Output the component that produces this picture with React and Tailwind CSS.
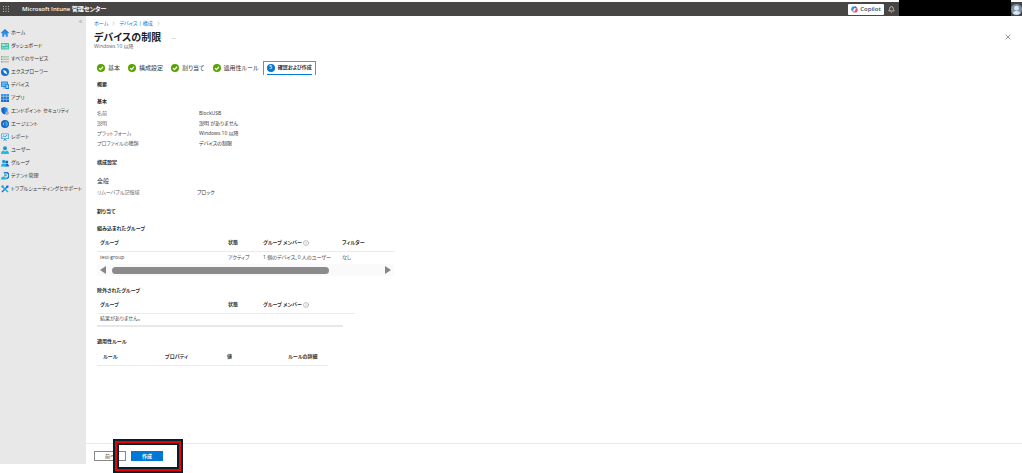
import { Bell, ChevronRight, ChevronsLeft, Info, X } from 'lucide-react'

const navItems = [
  { label: 'ホーム', icon: HomeIcon },
  { label: 'ダッシュボード', icon: DashboardIcon },
  { label: 'すべてのサービス', icon: ServicesIcon },
  { label: 'エクスプローラー', icon: ExplorerIcon },
  { label: 'デバイス', icon: DevicesIcon },
  { label: 'アプリ', icon: AppsIcon },
  { label: 'エンドポイント セキュリティ', icon: SecurityIcon },
  { label: 'エージェント', icon: AgentIcon },
  { label: 'レポート', icon: ReportIcon },
  { label: 'ユーザー', icon: UserIcon },
  { label: 'グループ', icon: GroupIcon },
  { label: 'テナント管理', icon: TenantIcon },
  { label: 'トラブルシューティングとサポート', icon: ToolsIcon },
]

const steps = ['基本', '構成設定', '割り当て', '適用性ルール']

const basics = [
  ['名前', 'BlockUSB'],
  ['説明', '説明 がありません'],
  ['プラットフォーム', 'Windows 10 以降'],
  ['プロファイルの種類', 'デバイスの制限'],
]

function Icon({ children }) {
  return (
    <svg viewBox="0 0 16 16" className="size-2 shrink-0" aria-hidden="true">
      {children}
    </svg>
  )
}

function HomeIcon() {
  return (
    <Icon>
      <path d="M2.500 7v8.500h4V11h3v4.500h4V7L8 2z" fill="#2b8fe6" />
      <path d="M8 0 0 7.500 1.500 9 8 3l6.500 6L16 7.500z" fill="#1b78cf" />
    </Icon>
  )
}

function DashboardIcon() {
  return (
    <Icon>
      <rect y="2" width="16" height="13" rx="1" fill="#45c3aa" />
      <path d="M2 4h7v4H2z" fill="#a5e6d6" />
      <path d="M11 4h3v4h-3zM2 10h3v3H2zM7 10h7v3H7z" fill="#8bdcc9" />
    </Icon>
  )
}

function ServicesIcon() {
  return (
    <Icon>
      <path d="M0 2h3v3H0zM0 7h3v3H0zM0 12h3v3H0z" fill="#6bb36b" />
      <path d="M4 2h12v3H4zM4 7h12v3H4zM4 12h12v3H4z" fill="#b7c4b5" />
    </Icon>
  )
}

function ExplorerIcon() {
  return (
    <Icon>
      <circle cx="8" cy="8" r="8" fill="#1672cc" />
      <path d="m4 4 6 2 2.500 6.500-6-2.500z" fill="#fff" />
    </Icon>
  )
}

function DevicesIcon() {
  return (
    <Icon>
      <rect y="1" width="14" height="11" rx="1" fill="#2389de" />
      <path d="M1.500 2.500h11v8h-11z" fill="#5db5f0" />
      <path d="M5 12h4v2h2v1H3v-1h2z" fill="#8aa4b8" />
      <rect x="9" y="6" width="7" height="10" rx="1" fill="#1672cc" />
      <path d="M10.500 7.500h4V14h-4z" fill="#8fd6fa" />
    </Icon>
  )
}

function AppsIcon() {
  return (
    <Icon>
      <path d="M0 0h5v5H0zM5.500 0h5v5h-5zM11 0h5v5h-5z" fill="#3f95e4" />
      <path d="M0 5.500h5v5H0zM5.500 5.500h5v5h-5zM11 5.500h5v5h-5z" fill="#2882da" />
      <path d="M0 11h5v5H0zM5.500 11h5v5h-5zM11 11h5v5h-5z" fill="#1b6fc8" />
    </Icon>
  )
}

function SecurityIcon() {
  return (
    <Icon>
      <path d="M7 0c2 1.500 4 2 6 2v5c0 4-3 6.500-6 8-3-1.500-6-4-6-8V2c2 0 4-.5 6-2z" fill="#1f8be6" />
      <path d="M7 0v15c-3-1.500-6-4-6-8V2c2 0 4-.5 6-2z" fill="#1268ba" />
      <circle cx="12" cy="12" r="3.500" fill="#8298ad" />
      <circle cx="12" cy="12" r="1.300" fill="#e8e8e8" />
    </Icon>
  )
}

function AgentIcon() {
  return (
    <Icon>
      <circle cx="8" cy="8" r="8" fill="#1566bd" />
      <path d="M9 2c3 1 5 3 5 6s-2 5-5 6c1-2 1-4 0-6s-1-4 0-6z" fill="#3fa0ea" />
      <path d="M7 3.500 5.500 8 7 12.500 3.500 8z" fill="#bfe3fb" />
    </Icon>
  )
}

function ReportIcon() {
  return (
    <Icon>
      <rect y="1" width="16" height="11" rx="1" fill="#46a3e0" />
      <path d="M1.500 2.500h13v8h-13z" fill="#d9f0fc" />
      <path d="m3 8 3-2.500 2 2L12.500 4" stroke="#1672cc" strokeWidth="1.500" fill="none" />
      <path d="M6 12h4v2h2v1H4v-1h2z" fill="#5c9cc5" />
    </Icon>
  )
}

function UserIcon() {
  return (
    <Icon>
      <circle cx="8" cy="4.500" r="4" fill="#1f95cc" />
      <path d="M0 16c0-5 3-7 5-7l3 2.500L11 9c2 0 5 2 5 7z" fill="#22b9dd" />
    </Icon>
  )
}

function GroupIcon() {
  return (
    <Icon>
      <circle cx="11.500" cy="6" r="3" fill="#1068bd" />
      <path d="M7 15c0-4 2-5.500 4.500-5.500S16 11 16 15z" fill="#1068bd" />
      <circle cx="5.500" cy="5" r="3.500" fill="#1d9ddb" />
      <path d="M0 15c0-4 2-6 5.500-6s5.500 2 5.500 6z" fill="#1cb3e0" />
    </Icon>
  )
}

function TenantIcon() {
  return (
    <Icon>
      <path d="M6 2.500a6 6 0 1 1 4.500 10.500" stroke="#1672cc" strokeWidth="3" fill="none" />
      <circle cx="9" cy="6.500" r="2.500" fill="#28b6e4" />
      <path d="M0 15c0-4 2-6 5-6s5 2 5 6z" fill="#1cb3e0" />
    </Icon>
  )
}

function ToolsIcon() {
  return (
    <Icon>
      <path d="m2 14 11-11" stroke="#1672cc" strokeWidth="3" />
      <path d="m3 3 11 11" stroke="#27aee0" strokeWidth="3" />
      <path d="M0 2.500 2.500 0 6 2 5 6 2 6z" fill="#27aee0" />
      <path d="m11 1 4 0 0 4-3 1-2-2z" fill="#1672cc" />
    </Icon>
  )
}

function CopilotIcon() {
  return (
    <svg viewBox="0 0 16 16" className="size-[7px] shrink-0" aria-hidden="true">
      <path d="M5 1h5c2 0 2.500 2 3 4H7L5 11H3C0 11 0 8 1 5s2-4 4-4z" fill="#2f8ce8" />
      <path d="M11 15H6c-2 0-2.500-2-3-4h6l2-6h2c3 0 3 3 2 6s-2 4-4 4z" fill="#e2508c" />
      <path d="M3 11h6l-1 4H6c-2 0-2.500-2-3-4z" fill="#f5b13d" />
      <path d="M10 1c2 0 2.500 2 3 4h-3L9 1z" fill="#6a4fd0" />
      <path d="M7 5.500h3.500L9 10.500H5.500z" fill="#fff" />
    </svg>
  )
}

function CheckIcon() {
  return (
    <Icon>
      <circle cx="8" cy="8" r="8" fill="#57a300" />
      <path d="m4 8.200 3 3L12 5.500" stroke="#fff" strokeWidth="2.500" fill="none" />
    </Icon>
  )
}

function SectionTitle({ children, className }) {
  return <h3 className={`text-[5px] leading-[10px] font-bold text-[#292827] ${className}`}>{children}</h3>
}

function HeadCell({ children, info = false, className = 'pl-[3px]' }) {
  return (
    <th scope="col" className={`h-4 text-left font-semibold text-[#323130] ${className}`}>
      <span className="flex items-center gap-px">
        {children}
        {info && <Info className="size-[6px] text-[#8a8886]" />}
      </span>
    </th>
  )
}

function TopBar() {
  return (
    <header className="mt-0.5 flex h-[14px] shrink-0 items-center bg-[#484644] text-white">
      <button type="button" aria-label="ポータル メニュー" className="ml-[2px] flex size-2 items-center justify-center">
        <svg viewBox="0 0 12 12" className="size-[6px]" fill="#b5b3b1">
          <path d="M0 0h2v2H0zM5 0h2v2H5zM10 0h2v2h-2zM0 5h2v2H0zM5 5h2v2H5zM10 5h2v2h-2zM0 10h2v2H0zM5 10h2v2H5zM10 10h2v2h-2z" />
        </svg>
      </button>
      <h1 className="ml-3 text-[6px] font-semibold">Microsoft Intune 管理センター</h1>
      <button
        type="button"
        className="ml-auto flex h-[11px] w-9 items-center justify-center gap-0.5 rounded-[1px] bg-white text-[6px] font-semibold text-[#3b4a63]"
      >
        <CopilotIcon />
        Copilot
      </button>
      <button type="button" aria-label="通知" className="mx-1 flex size-[7px] items-center">
        <Bell className="size-[7px]" />
      </button>
      <div className="-mt-0.5 h-4 w-28 bg-black" />
      <button type="button" aria-label="アカウント" className="w-[11px]">
        <svg viewBox="0 0 16 16" className="size-[11px]">
          <circle cx="8" cy="8" r="8" fill="#7f93a8" />
          <circle cx="8" cy="6" r="3.500" fill="#dce4ec" />
          <path d="M2.500 13.500c1-3 3-3.500 5.500-3.500s4.500.5 5.500 3.500a8 8 0 0 1-11 0z" fill="#dce4ec" />
        </svg>
      </button>
    </header>
  )
}

function Sidebar() {
  return (
    <nav className="mb-[9px] w-[86px] shrink-0 bg-[#e8e8e8]">
      <div className="flex h-[10px] items-center justify-end pr-[3px]">
        <button type="button" aria-label="メニューを折りたたむ">
          <ChevronsLeft className="size-[5px] text-[#605e5c]" />
        </button>
      </div>
      <ul>
        {navItems.map(({ label, icon: ItemIcon }) => (
          <li key={label}>
            <a href="#" className="flex h-[13px] items-center gap-[2px] pl-px text-[5px] text-[#323130]">
              <ItemIcon />
              {label}
            </a>
          </li>
        ))}
      </ul>
    </nav>
  )
}

function Wizard() {
  return (
    <ol className="mt-3 flex h-[14px] items-center gap-2 text-[6px] text-[#323130]">
      {steps.map((step) => (
        <li key={step}>
          <button type="button" className="flex items-center gap-[3px]">
            <CheckIcon />
            {step}
          </button>
        </li>
      ))}
      <li className="-ml-1 h-[14px] border border-b-0 border-[#8a8886] px-[3px]">
        <button
          type="button"
          aria-current="step"
          className="flex h-[13px] items-center gap-[3px] border-b border-[#0078d4] text-[5px] font-semibold"
        >
          <span className="flex size-2 items-center justify-center rounded-full bg-[#0078d4] text-white">5</span>
          確認および作成
        </button>
      </li>
    </ol>
  )
}

function IncludedGroups() {
  return (
    <div className="mt-0.5 w-[297px]">
      <table className="w-full table-fixed text-[5px]">
        <colgroup>
          <col className="w-32" />
          <col className="w-[35px]" />
          <col className="w-[79px]" />
          <col />
        </colgroup>
        <thead>
          <tr className="border-b border-[#edebe9]">
            <HeadCell>グループ</HeadCell>
            <HeadCell>状態</HeadCell>
            <HeadCell info>グループ メンバー</HeadCell>
            <HeadCell>フィルター</HeadCell>
          </tr>
        </thead>
        <tbody>
          <tr className="text-[#484644]">
            <td className="h-[13px] pl-[3px]">test-group</td>
            <td className="pl-[3px]">アクティブ</td>
            <td className="pl-[3px]">1 個のデバイス、0 人のユーザー</td>
            <td className="pl-[3px]">なし</td>
          </tr>
        </tbody>
      </table>
      <div className="flex h-3 items-center bg-[#fafafa] px-[3px]">
        <svg viewBox="0 0 6 8" className="h-2 w-[6px]" fill="#858585">
          <path d="M6 0v8L0 4z" />
        </svg>
        <div className="ml-[6px] h-[7px] w-[217px] rounded-full bg-[#8b8b8b]" />
        <svg viewBox="0 0 6 8" className="ml-auto h-2 w-[6px]" fill="#858585">
          <path d="M0 0v8l6-4z" />
        </svg>
      </div>
    </div>
  )
}

function ExcludedGroups() {
  return (
    <div className="mt-0.5 w-[258px]">
      <table className="w-full table-fixed text-[5px]">
        <colgroup>
          <col className="w-32" />
          <col className="w-[35px]" />
          <col />
        </colgroup>
        <thead>
          <tr className="border-b border-[#edebe9]">
            <HeadCell>グループ</HeadCell>
            <HeadCell>状態</HeadCell>
            <HeadCell info>グループ メンバー</HeadCell>
          </tr>
        </thead>
        <tbody>
          <tr className="text-[#484644]">
            <td className="h-3 pl-[3px] pb-0.5" colSpan={3}>結果がありません。</td>
          </tr>
        </tbody>
      </table>
      <div className="mr-3 h-0.5 bg-[#e8e8e8]" />
    </div>
  )
}

function ApplicabilityRules() {
  return (
    <table className="mt-[3px] w-[231px] table-fixed text-[5px]">
      <thead>
        <tr className="border-b border-[#edebe9]">
          <HeadCell className="w-[62px] pl-[6px]">ルール</HeadCell>
          <HeadCell className="w-[62px] pl-[6px]">プロパティ</HeadCell>
          <HeadCell className="w-[61px] pl-[6px]">値</HeadCell>
          <HeadCell className="pl-[6px]">ルールの詳細</HeadCell>
        </tr>
      </thead>
    </table>
  )
}

export default function App() {
  return (
    <div className="flex h-screen flex-col bg-white font-['Open_Sans','Noto_Sans_CJK_JP',sans-serif] whitespace-nowrap [font-feature-settings:'palt']">
      <TopBar />
      <div className="flex min-h-0 flex-1">
        <Sidebar />
        <main className="flex min-w-0 flex-1 flex-col">
          <div className="min-h-0 flex-1 overflow-hidden pt-0.5 pl-2">
            <nav className="flex items-center gap-[3px] text-[5px] leading-[10px] text-[#0078d4]">
              <a href="#">ホーム</a>
              <ChevronRight className="size-[5px] text-[#8a8886]" />
              <a href="#">デバイス | 構成</a>
              <ChevronRight className="size-[5px] text-[#8a8886]" />
            </nav>
            <div className="mt-[3px] flex items-center leading-3">
              <h2 className="text-[10px] font-semibold text-[#201f1e]">デバイスの制限</h2>
              <button type="button" aria-label="その他" className="ml-2.5 text-[6px] text-[#8a8886]">…</button>
              <button type="button" aria-label="閉じる" className="mr-2.5 ml-auto">
                <X className="size-2 text-[#605e5c]" strokeWidth={2} />
              </button>
            </div>
            <p className="text-[5px] leading-[6px] text-[#605e5c]">Windows 10 以降</p>

            <div className="pl-[3px]">
              <Wizard />
              <SectionTitle className="mt-1">概要</SectionTitle>
              <SectionTitle className="mt-[7px]">基本</SectionTitle>
              <dl className="mt-0.5 text-[5px] leading-[10px]">
                {basics.map(([label, value]) => (
                  <div key={label} className="flex">
                    <dt className="w-[102px] text-[#605e5c]">{label}</dt>
                    <dd className="text-[#323130]">{value}</dd>
                  </div>
                ))}
              </dl>

              <SectionTitle className="mt-[9px]">構成設定</SectionTitle>
              <h4 className="mt-[9px] text-[6px] leading-[10px] text-[#323130]">全般</h4>
              <dl className="mt-px flex text-[5px] leading-[10px]">
                <dt className="w-[100px] text-[#605e5c]">リムーバブル記憶域</dt>
                <dd className="text-[#323130]">ブロック</dd>
              </dl>

              <SectionTitle className="mt-[9px]">割り当て</SectionTitle>
              <SectionTitle className="mt-[7px]">組み込まれたグループ</SectionTitle>
              <IncludedGroups />
              <SectionTitle className="mt-[9px]">除外されたグループ</SectionTitle>
              <ExcludedGroups />
              <SectionTitle className="mt-[9px]">適用性ルール</SectionTitle>
              <ApplicabilityRules />
            </div>
          </div>

          <footer className="relative flex h-[30px] shrink-0 items-start gap-[5px] border-t border-[#edebe9] pt-[7px] pl-2 text-[6px]">
            <button type="button" className="h-[10px] w-8 border border-[#8a8886] text-[5px] leading-2 text-[#323130]">前へ</button>
            <button type="button" className="h-[10px] w-8 bg-[#0078d4] text-[5px] leading-[10px] font-semibold text-white">作成</button>
            <div className="pointer-events-none absolute bottom-0 left-[27px] h-[34px] w-[70px] border-2 border-[#03202f]">
              <div className="h-full border-2 border-[#f00000]">
                <div className="h-full border-2 border-[#03202f]" />
              </div>
            </div>
          </footer>
        </main>
      </div>
    </div>
  )
}
